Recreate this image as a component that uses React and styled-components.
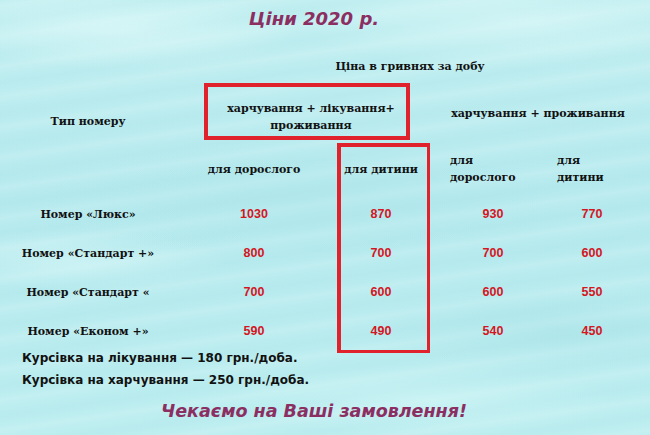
import React from 'react';
import styled, { createGlobalStyle, css } from 'styled-components';

const rooms = [
  { name: 'Номер «Люкс»', prices: [1030, 870, 930, 770] },
  { name: 'Номер «Стандарт +»', prices: [800, 700, 700, 600] },
  { name: 'Номер «Стандарт «', prices: [700, 600, 600, 550] },
  { name: 'Номер «Економ +»', prices: [590, 490, 540, 450] },
];

const App = () => {
  return (
    <>
      <GlobalStyle />
      <Page>
        <Title>Ціни 2020 р.</Title>
        <Table>
          <Caption>Ціна в гривнях за добу</Caption>
          <TypeHead>Тип номеру</TypeHead>
          <BoxHead>
            харчування + лікування+
            <br />
            проживання
          </BoxHead>
          <GroupHead>харчування + проживання</GroupHead>

          <SubHead col={2}>для дорослого</SubHead>
          <SubHead col={3}>для дитини</SubHead>
          <SubHead col={4} left pad={20}>
            для
            <br />
            дорослого
          </SubHead>
          <SubHead col={5} left pad={1}>
            для
            <br />
            дитини
          </SubHead>

          {rooms.map((room, r) => (
            <React.Fragment key={room.name}>
              <RoomName row={r + 4}>{room.name}</RoomName>
              {room.prices.map((p, i) => (
                <Price key={i} row={r + 4} col={i + 2}>
                  {p}
                </Price>
              ))}
            </React.Fragment>
          ))}

          <ChildFrame />
        </Table>

        <Notes>
          <p>Курсівка на лікування — 180 грн./доба.</p>
          <p>Курсівка на харчування — 250 грн./доба.</p>
        </Notes>

        <Footer>Чекаємо на Ваші замовлення!</Footer>
      </Page>
    </>
  );
};

export default App;

const GlobalStyle = createGlobalStyle`
  body {
    margin: 0;
    background: #bdeef0;
  }
  * {
    box-sizing: border-box;
  }
`;

const Page = styled.div`
  width: 650px;
  height: 435px;
  overflow: hidden;
  padding: 8px 22px 0 0;
  background:
    radial-gradient(ellipse 180px 40px at 120px 30px, rgba(230, 252, 252, 0.55), transparent),
    radial-gradient(ellipse 220px 50px at 520px 20px, rgba(225, 250, 250, 0.5), transparent),
    radial-gradient(ellipse 160px 30px at 70px 260px, rgba(225, 250, 250, 0.45), transparent),
    radial-gradient(ellipse 200px 40px at 560px 330px, rgba(160, 222, 228, 0.35), transparent),
    radial-gradient(ellipse 260px 60px at 300px 200px, rgba(170, 228, 232, 0.3), transparent),
    radial-gradient(ellipse 200px 35px at 420px 400px, rgba(215, 248, 248, 0.45), transparent),
    repeating-linear-gradient(
      172deg,
      rgba(255, 255, 255, 0) 0px,
      rgba(255, 255, 255, 0.12) 6px,
      rgba(255, 255, 255, 0) 14px,
      rgba(150, 215, 222, 0.1) 22px,
      rgba(255, 255, 255, 0) 30px
    ),
    linear-gradient(180deg, #c2eff1 0%, #b6eaee 45%, #bdeef0 100%);
`;

const Title = styled.h1`
  margin: 0;
  font-family: 'DejaVu Sans', Verdana, sans-serif;
  font-style: italic;
  font-weight: bold;
  font-size: 18px;
  line-height: 22px;
  text-align: center;
  color: #8b2f62;
`;

const Table = styled.div`
  display: grid;
  grid-template-columns: 176px 156px 98px 126px 72px;
  grid-template-rows: 34px 60px 52px repeat(4, 39px);
  margin-top: 19px;
  font-family: 'DejaVu Serif', 'Liberation Serif', serif;
  font-weight: bold;
  font-size: 11px;
  line-height: 17px;
  color: #111;
`;

const Cell = styled.div`
  display: flex;
  align-items: center;
  justify-content: center;
  text-align: center;
`;

const Caption = styled(Cell)`
  grid-column: 2 / 6;
  grid-row: 1;
  padding-left: 16px;
`;

const TypeHead = styled(Cell)`
  grid-column: 1;
  grid-row: 2;
  padding-top: 16px;
`;

const BoxHead = styled(Cell)`
  grid-column: 2 / 4;
  grid-row: 2;
  margin: 0 20px 3px 28px;
  padding: 10px 0 0 8px;
  border: 4px solid #e0222c;
`;

const GroupHead = styled(Cell)`
  grid-column: 4 / 6;
  grid-row: 2;
  padding-left: 18px;
`;

const SubHead = styled(Cell)`
  grid-column: ${(p) => p.col};
  grid-row: 3;
  ${(p) =>
    p.left &&
    css`
      justify-content: flex-start;
      text-align: left;
      padding-left: ${p.pad}px;
    `}
`;

const RoomName = styled(Cell)`
  grid-column: 1;
  grid-row: ${(p) => p.row};
`;

const Price = styled(Cell)`
  grid-column: ${(p) => p.col};
  grid-row: ${(p) => p.row};
  font-family: 'Liberation Sans', Arial, sans-serif;
  font-weight: bold;
  font-size: 12.5px;
  color: #d3161f;
`;

const ChildFrame = styled.div`
  grid-column: 3;
  grid-row: 3 / 8;
  margin: 0 0 -2px 5px;
  border: 4px solid #e0222c;
  border-right-width: 3px;
  border-bottom-width: 3px;
  pointer-events: none;
`;

const Notes = styled.div`
  margin-top: -4px;
  padding-left: 22px;
  font-family: 'DejaVu Sans', Verdana, sans-serif;
  font-weight: bold;
  font-size: 12px;
  line-height: 22px;
  color: #111;
  > p {
    margin: 0;
  }
`;

const Footer = styled.div`
  margin-top: 9px;
  font-family: 'DejaVu Sans', Verdana, sans-serif;
  font-style: italic;
  font-weight: bold;
  font-size: 17.5px;
  line-height: 22px;
  text-align: center;
  color: #8b2f62;
`;
